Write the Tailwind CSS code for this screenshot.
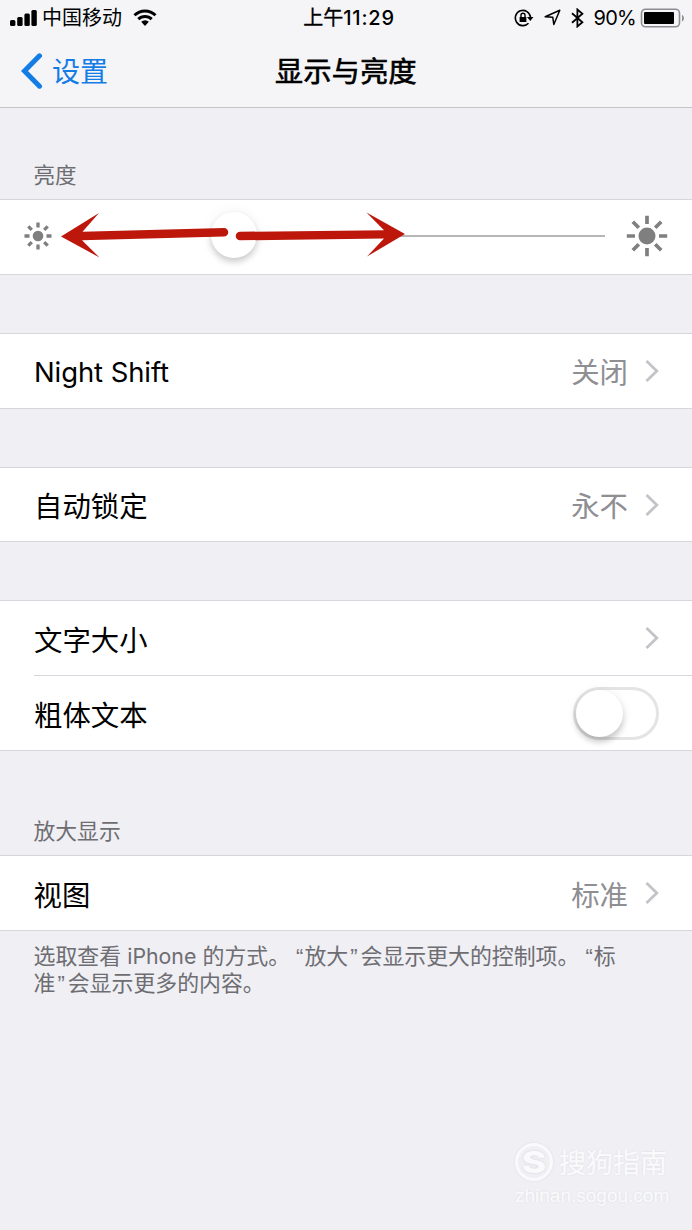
<!DOCTYPE html>
<html lang="zh-CN">
<head>
    <meta charset="UTF-8">
    <meta name="viewport" content="width=device-width, initial-scale=1.0">
    <title>显示与亮度</title>
    <script src="https://cdn.jsdelivr.net/npm/@tailwindcss/browser@4"></script>
</head>
<body class="bg-[#efeff4] font-['Inter','Noto_Sans_CJK_SC',sans-serif] text-black">
<div class="relative w-[692px] h-[1230px] overflow-hidden flex flex-col">

    <!-- Status bar + navigation -->
    <header class="h-[108px] shrink-0 bg-[#f5f5f8] border-b border-[#c3c3ca]">
        <div class="h-[34px] grid grid-cols-[1fr_auto_1fr] items-center text-[20px] leading-[32px] pt-px">
            <div class="flex items-center pl-[9px]">
                <svg class="w-[28px] h-[18px]" viewBox="0 0 28 18">
                    <rect x="1" y="11" width="5.400" height="6" rx="1.500"/>
                    <rect x="8.200" y="8" width="5.400" height="9" rx="1.500"/>
                    <rect x="15.400" y="4.500" width="5.400" height="12.500" rx="1.500"/>
                    <rect x="22.400" y="1" width="5.400" height="16" rx="1.500"/>
                </svg>
                <span class="ml-[5px] pt-px">中国移动</span>
                <svg class="ml-[11px] w-[24px] h-[18px]" viewBox="0 0 24 18">
                    <path d="M1.500 6.200a15 15 0 0 1 21 0M5.300 10.100a9.600 9.600 0 0 1 13.400 0" fill="none" stroke="#000" stroke-width="3"/>
                    <path d="M8.200 12.800a5.400 5.400 0 0 1 7.600 0L12 17z"/>
                </svg>
            </div>
            <div class="pl-[6px] pt-px font-medium tracking-[0.8px]"><span class="font-normal tracking-normal [-webkit-text-stroke:0.3px_#000]">上午</span>11:29</div>
            <div class="flex items-center justify-end pr-[7px]">
                <!-- Rotation lock -->
                <svg class="w-[20px] h-[18px]" viewBox="0 0 20 18" fill="none" stroke="#000">
                    <path d="M14.500 14.200A7.600 7.600 0 1 1 16.500 8.200" stroke-width="1.600"/>
                    <path d="M13 8h6.500l-3.200 4z" fill="#000" stroke="none"/>
                    <rect x="5.600" y="8" width="6.800" height="5" fill="#000" stroke="none"/>
                    <path d="M7 8V6.300a2 2 0 0 1 4 0V8" stroke-width="1.400"/>
                </svg>
                <!-- Location -->
                <svg class="ml-[10px] w-[17px] h-[17px]" viewBox="0 0 17 17" fill="none" stroke="#000" stroke-width="1.500" stroke-linejoin="round">
                    <path d="M15.800 1.200L9.800 15.500 8.800 8.300 1.200 7.800z"/>
                </svg>
                <!-- Bluetooth -->
                <svg class="ml-[10px] w-[13px] h-[20px]" viewBox="0 0 13 20" fill="none" stroke="#000" stroke-width="1.800">
                    <path d="M1 5.200l10.400 9-5 4.300V1.500l5 4.300L1 14.800"/>
                </svg>
                <span class="ml-[9px] pt-px tracking-[-0.7px]">90%</span>
                <svg class="ml-[4px] w-[45px] h-[20px]" viewBox="0 0 45 20">
                    <rect x="1.500" y="1.200" width="38" height="17.600" rx="4" fill="none" stroke="#8e8e92" stroke-width="1.600"/>
                    <rect x="4" y="4" width="30" height="12" rx="1"/>
                    <path d="M42 7v6.500c2.600-1.200 2.600-5.300 0-6.500z" fill="#8e8e92"/>
                </svg>
            </div>
        </div>
        <div class="h-[73px] grid grid-cols-[1fr_auto_1fr] items-center text-[28px]">
            <div class="flex items-center pl-[20px] text-[#147ce5]">
                <svg class="w-[24px] h-[36px]" viewBox="0 0 24 36" fill="none" stroke="#147ce5" stroke-width="5" stroke-linecap="round" stroke-linejoin="miter">
                    <path d="M19.500 2.800L4.500 18l15 15.200"/>
                </svg>
                <span class="ml-[8px] pt-[2px]">设置</span>
            </div>
            <h1 class="pt-[2px] tracking-[0.4px] [-webkit-text-stroke:0.7px_#000]">显示与亮度</h1>
        </div>
    </header>

    <main>
        <!-- Brightness -->
        <h2 class="h-[91px] pt-[51px] pl-[33.500px] text-[21.500px] leading-[32px] text-[#6d6d72]">亮度</h2>
        <section class="relative h-[76px] bg-white border-y border-[#d6d6dc] flex items-center pl-[24px] pr-[24px] pb-[2px]">
            <svg class="w-[28px] h-[28px]" viewBox="-14 -14 28 28" fill="none" stroke="#7f7f7f" stroke-width="3.300">
                <circle r="5.300" fill="#7f7f7f" stroke="none"/>
                <path d="M0-13.500v5M0 8.500v5M-13.500 0h5M8.500 0h5M-9.700-9.700l3.500 3.500M6.200 6.200l3.500 3.500M-9.700 9.700l3.500-3.500M6.200-6.200l3.500-3.500"/>
            </svg>
            <div class="ml-[35px] w-[518px] h-[2px] bg-[#b7b7b7]"></div>
            <svg class="ml-auto w-[42px] h-[42px]" viewBox="-21 -21 42 42" fill="none" stroke="#7f7f7f" stroke-width="3.700">
                <circle r="8.500" fill="#7f7f7f" stroke="none"/>
                <path d="M0-20.200v8.200M0 12v8.200M-20.200 0h8.200M12 0h8.200M-14.200-14.200l6 6M8.200 8.200l6 6M-14.200 14.200l6-6M8.200-8.200l6-6"/>
            </svg>
            <div class="absolute left-[211px] top-[12px] size-[46px] rounded-full bg-white shadow-[0_4px_6px_rgba(0,0,0,0.18),0_0_14px_rgba(0,0,0,0.06)]"></div>
            <!-- Drag direction arrows -->
            <svg class="absolute left-0 top-0 w-[692px] h-[74px]" viewBox="0 200 692 74" fill="#bd170b">
                <path d="M61 236.500L99 213 82.500 231.800 224 228a4.200 4.200 0 0 1 0 8.500L82 240.300 99.500 257.500z"/>
                <path d="M405 234L366.500 212.500 384 230.200 240 231.800a4.200 4.200 0 0 0 0 8.500L384 238.500 367 256.500z"/>
            </svg>
        </section>

        <section class="mt-[58px] h-[76px] bg-white border-y border-[#d6d6dc] flex items-center pl-[34px] pr-[33px] text-[28.400px]">
            <span class="pt-[3px] text-[27.500px] tracking-[-0.1px]">Night Shift</span>
            <span class="ml-auto pt-[5px] text-[#8e8e93]">关闭</span>
            <svg class="ml-[17px] mb-px w-[14px] h-[22px]" viewBox="0 0 14 22" fill="none" stroke="#c4c4c8" stroke-width="2.800"><path d="M1.500 1l10.300 10L1.500 21"/></svg>
        </section>

        <section class="mt-[58px] h-[75px] bg-white border-y border-[#d6d6dc] flex items-center pl-[34px] pr-[33px] text-[28.400px]">
            <span class="pt-[6px]">自动锁定</span>
            <span class="ml-auto pt-[6px] text-[#8e8e93]">永不</span>
            <svg class="ml-[17px] w-[14px] h-[22px]" viewBox="0 0 14 22" fill="none" stroke="#c4c4c8" stroke-width="2.800"><path d="M1.500 1l10.300 10L1.500 21"/></svg>
        </section>

        <!-- Text settings -->
        <section class="mt-[58px] h-[151px] bg-white border-y border-[#d6d6dc] pl-[34px] text-[28.400px]">
            <div class="h-[75px] flex items-center pr-[33px] border-b border-[#d6d6dc]">
                <span class="pt-[6px]">文字大小</span>
                <svg class="ml-auto w-[14px] h-[22px]" viewBox="0 0 14 22" fill="none" stroke="#c4c4c8" stroke-width="2.800"><path d="M1.500 1l10.300 10L1.500 21"/></svg>
            </div>
            <div class="h-[75px] flex items-center pr-[33px]">
                <span class="pt-[6px]">粗体文本</span>
                <div class="ml-auto w-[86px] h-[53px] rounded-full border-[3px] border-[#e4e4e4]">
                    <div class="size-[47px] rounded-full bg-white shadow-[0_5px_6px_rgba(0,0,0,0.2),0_0_12px_rgba(0,0,0,0.06)]"></div>
                </div>
            </div>
        </section>

        <!-- Display zoom -->
        <h2 class="h-[104px] pt-[64px] pl-[33.500px] text-[21.800px] leading-[32px] text-[#6d6d72]">放大显示</h2>
        <section class="h-[76px] bg-white border-y border-[#d6d6dc] flex items-center pl-[33.500px] pr-[33px] text-[28.400px]">
            <span class="pt-[6px]">视图</span>
            <span class="ml-auto pt-[6px] text-[#8e8e93]">标准</span>
            <svg class="ml-[17px] w-[14px] h-[22px]" viewBox="0 0 14 22" fill="none" stroke="#c4c4c8" stroke-width="2.800"><path d="M1.500 1l10.300 10L1.500 21"/></svg>
        </section>
        <p class="pt-[12px] pl-[33.500px] text-[21.900px] leading-[27px] text-[#6d6d72] whitespace-nowrap">选取查看 <span class="text-[21.300px]">iPhone</span> 的方式。<span class="ml-[6px] mr-px font-['Liberation_Sans']">“</span>放大<span class="ml-[2px] mr-[3px] font-['Liberation_Sans']">”</span>会显示更大的控制项。<span class="ml-[6px] mr-px font-['Liberation_Sans']">“</span>标<br>准<span class="ml-[2px] mr-[3px] font-['Liberation_Sans']">”</span>会显示更多的内容。</p>
    </main>

    <!-- Watermark -->
    <div class="absolute left-[515px] top-[1142px] w-[160px] text-[#fafafc] [text-shadow:0_0_2px_rgba(0,0,0,0.12)]">
        <div class="flex items-center h-[40px]">
            <div class="size-[38px] shrink-0 rounded-full border-[3px] border-[#fafafc] shadow-[0_0_2px_rgba(0,0,0,0.12)] flex items-center justify-center">
                <span class="inline-block scale-x-125 text-[30px] leading-none font-extrabold">S</span>
            </div>
            <span class="ml-[6px] pt-[5px] text-[27px] whitespace-nowrap [-webkit-text-stroke:0.4px_#fafafc]">搜狗指南</span>
        </div>
        <div class="text-[19px] leading-[28px] whitespace-nowrap font-['Liberation_Sans',sans-serif] [-webkit-text-stroke:0.3px_#fafafc]">zhinan.sogou.com</div>
    </div>
</div>
</body>
</html>
